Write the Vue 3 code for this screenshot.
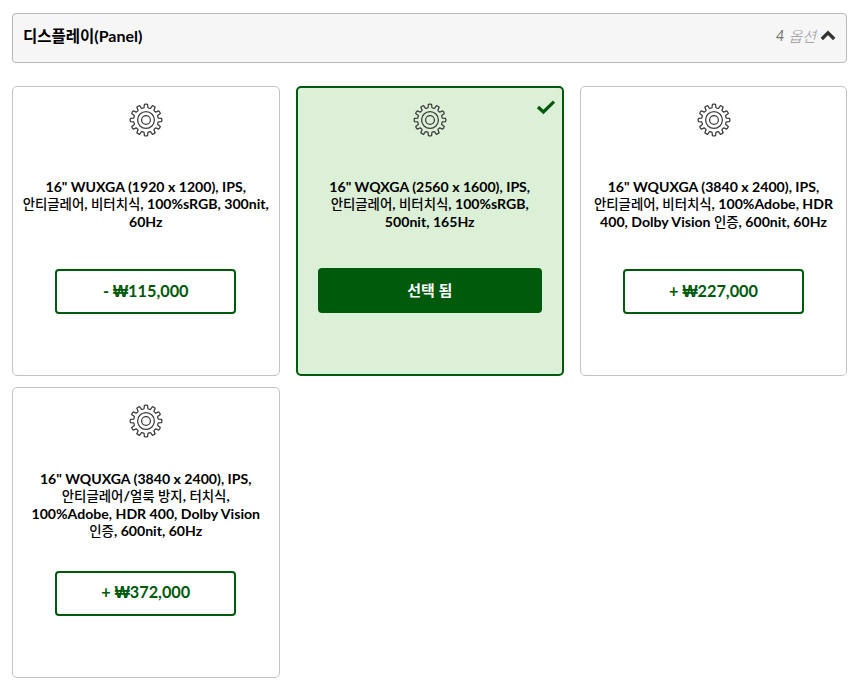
<template>
  <div class="page">
    <div class="panel-head">
      <span class="panel-title"><span class="ko-title">디스플레이</span>(Panel)</span>
      <span class="panel-count">
        <span class="count-num">4</span> <em>옵션</em>
        <svg class="chevron" width="16" height="11" viewBox="0 0 16 11">
          <path d="M1.8 9 8 2.8 14.2 9" fill="none" stroke="#333" stroke-width="3.2" />
        </svg>
      </span>
    </div>

    <div class="options">
      <div
        v-for="opt in options"
        :key="opt.id"
        class="card"
        :class="{ selected: opt.selected }"
      >
        <svg v-if="opt.selected" class="check" width="20" height="16" viewBox="0 0 20 16">
          <path d="M2 8 7.4 13 18 2.6" fill="none" stroke="#005a0b" stroke-width="3.2" />
        </svg>
        <svg class="gear" width="34" height="34" viewBox="0 0 34 34" fill="none" stroke="#3c3c3c">
          <path :d="gearPath" stroke-width="1.25" stroke-linejoin="round" />
          <circle cx="17" cy="17" r="8.4" stroke-width="1.25" />
          <circle cx="17" cy="17" r="4.4" stroke-width="1.25" />
        </svg>
        <div class="desc">
          <div v-for="line in opt.lines" :key="line">
            <span
              v-for="(part, i) in splitKo(line)"
              :key="i"
              :class="{ ko: part.ko }"
            >{{ part.text }}</span>
          </div>
        </div>
        <div class="price" :class="{ chosen: opt.selected }">
          <div class="price-text">
            <span
              v-for="(part, i) in splitWon(opt.price)"
              :key="i"
              :class="{ won: part.won }"
            >{{ part.text }}</span>
          </div>
        </div>
      </div>
    </div>
  </div>
</template>

<script setup>
const options = [
  {
    id: 1,
    lines: ['16" WUXGA (1920 x 1200), IPS,', '안티글레어, 비터치식, 100%sRGB, 300nit,', '60Hz'],
    price: '- ₩115,000'
  },
  {
    id: 2,
    lines: ['16" WQXGA (2560 x 1600), IPS,', '안티글레어, 비터치식, 100%sRGB,', '500nit, 165Hz'],
    price: '선택 됨',
    selected: true
  },
  {
    id: 3,
    lines: ['16" WQUXGA (3840 x 2400), IPS,', '안티글레어, 비터치식, 100%Adobe, HDR', '400, Dolby Vision 인증, 600nit, 60Hz'],
    price: '+ ₩227,000'
  },
  {
    id: 4,
    lines: ['16" WQUXGA (3840 x 2400), IPS,', '안티글레어/얼룩 방지, 터치식,', '100%Adobe, HDR 400, Dolby Vision', '인증, 600nit, 60Hz'],
    price: '+ ₩372,000'
  }
]

const splitKo = (line) =>
  line.split(/([가-힣]+)/).filter(Boolean).map((text) => ({ text, ko: /[가-힣]/.test(text) }))

const splitWon = (price) =>
  price.split(/(₩)/).filter(Boolean).map((text) => ({ text, won: text === '₩' }))

// 12 flat teeth around the hub
const buildGear = () => {
  const teeth = 12
  const step = (Math.PI * 2) / teeth
  const pt = (r, a) => `${(17 + r * Math.cos(a)).toFixed(2)} ${(17 + r * Math.sin(a)).toFixed(2)}`
  let d = ''
  for (let i = 0; i < teeth; i++) {
    const a = i * step - Math.PI / 2
    d += `${i === 0 ? 'M' : 'L'}${pt(12.5, a - step * 0.3)} `
    d += `L${pt(15.7, a - step * 0.19)} `
    d += `Q${pt(16.1, a)} ${pt(15.7, a + step * 0.19)} `
    d += `L${pt(12.5, a + step * 0.3)} `
    d += `Q${pt(12, a + step / 2)} ${pt(12.5, a + step * 0.7)} `
  }
  return d + 'Z'
}
const gearPath = buildGear()
</script>

<style scoped>
.page {
  padding: 13px 13px 0 12px;
  font-family: Lato, "Noto Sans CJK KR", sans-serif;
  color: #000;
}

.panel-head {
  height: 50px;
  box-sizing: border-box;
  display: flex;
  align-items: center;
  justify-content: space-between;
  padding: 0 10px 6px;
  background: #f6f6f6;
  border: 1px solid #b8b8b8;
  border-radius: 4px;
}

.panel-title {
  font-size: 16px;
  font-weight: 700;
}

.ko-title {
  font-size: 15.5px;
}

.panel-count {
  display: flex;
  align-items: center;
  gap: 4px;
  font-size: 15px;
  color: #777;
}

.panel-count em {
  font-style: italic;
  font-weight: 300;
  color: #999;
}

.count-num {
  font-style: italic;
}

.options {
  display: grid;
  grid-template-columns: 267.5px 267.5px 1fr;
  column-gap: 16.5px;
  row-gap: 11px;
  margin-top: 23px;
}

.card {
  position: relative;
  height: 290.4px;
  box-sizing: border-box;
  display: flex;
  flex-direction: column;
  align-items: center;
  padding: 16px 10px 0;
  background: #fff;
  border: 1px solid #c4c4c4;
  border-radius: 5px;
}

.card.selected {
  background: #dcf0d8;
  border: 2px solid #005a0b;
  padding-top: 15px;
}

.check {
  position: absolute;
  top: 11px;
  right: 6px;
}

.gear {
  flex: none;
}

.desc {
  height: 68px;
  margin-top: 33px;
  display: flex;
  flex-direction: column;
  justify-content: center;
  text-align: center;
  font-size: 14.1px;
  font-weight: 700;
  line-height: 17px;
  white-space: nowrap;
}

.ko {
  font-size: 13.4px;
  font-weight: 500;
}

.price {
  width: 181px;
  height: 45px;
  box-sizing: border-box;
  margin-top: 31.4px;
  padding-bottom: 2px;
  display: flex;
  align-items: center;
  justify-content: center;
  color: #005a0b;
  background: #fff;
  border: 2px solid #005a0b;
  border-radius: 4px;
  font-size: 16.3px;
  font-weight: 700;
}

.price-text {
  white-space: pre;
}

.won {
  font-family: "Liberation Sans", sans-serif;
  font-size: 16px;
}

.price.chosen {
  width: 224px;
  margin-top: 30.4px;
  color: #fff;
  background: #005a0b;
  font-size: 15px;
}
</style>
